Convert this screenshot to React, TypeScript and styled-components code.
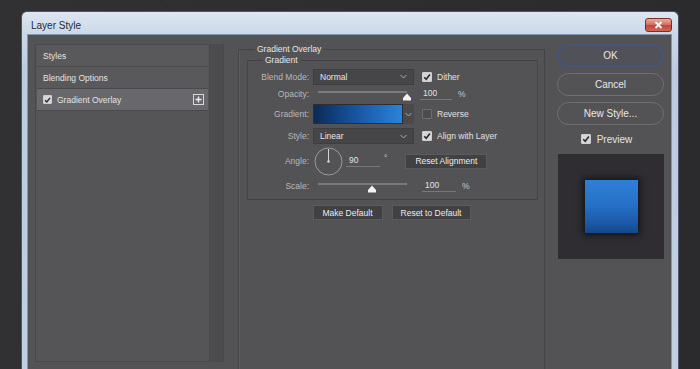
import React from "react";
import styled, { createGlobalStyle } from "styled-components";

const GlobalStyle = createGlobalStyle`
  html, body {
    margin: 0;
    padding: 0;
    background: #2c2b2e;
    overflow: hidden;
  }
  body {
    font-family: "Liberation Sans", Arial, sans-serif;
  }
`;

const Screen = styled.div`
  width: 700px;
  height: 369px;
  overflow: hidden;
  box-sizing: border-box;
  padding: 11px 0 0 21px;
  background: linear-gradient(90deg, #313033 0%, #2b2a2d 100%);
`;

const Window = styled.div`
  width: 658px;
  height: 400px;
  display: flex;
  flex-direction: column;
  box-sizing: border-box;
  padding: 0 6px 0 5px;
  border: 1px solid #4a5669;
  border-bottom: none;
  border-radius: 6px 6px 0 0;
  background: linear-gradient(180deg, #dde6f1 0px, #cbd8e8 22px, #bccbe0 60px, #c3d0e3 100%);
`;

const TitleBar = styled.div`
  height: 22px;
  display: flex;
  align-items: flex-start;
  justify-content: space-between;
`;

const TitleText = styled.div`
  padding: 8px 0 0 4px;
  font-family: "Liberation Sans", Arial, sans-serif;
  font-size: 10px;
  color: #1c2a3c;
`;

const CloseButton = styled.div`
  width: 27px;
  height: 14px;
  margin-top: 6px;
  box-sizing: border-box;
  border: 1px solid #7a2f27;
  border-radius: 3px;
  background: linear-gradient(180deg, #e6aa9f 0%, #d47466 45%, #c2473a 55%, #d06a56 100%);
  display: flex;
  align-items: center;
  justify-content: center;
`;

const Content = styled.div`
  flex: 1;
  display: flex;
  gap: 14px;
  box-sizing: border-box;
  padding: 9px 7px 0 7px;
  border: 1px solid #8596ad;
  border-bottom: none;
  background: #535255;
  font-size: 8.5px;
  color: #e2e2e2;
`;

/* left style list */

const LeftColumn = styled.div`
  display: flex;
  width: 189px;
  height: 318px;
  flex: none;
`;

const StyleList = styled.div`
  width: 175px;
  box-sizing: border-box;
  border: 1px solid #49484b;
  background: #555457;
  padding: 0 1px;
  display: flex;
  flex-direction: column;
`;

const StyleItem = styled.div<{ $selected?: boolean }>`
  height: 21px;
  display: flex;
  align-items: center;
  gap: 5px;
  padding: 0 4px 0 6px;
  border-bottom: 1px solid #4a494c;
  background: ${(p) => (p.$selected ? "#68676b" : "#59585b")};
  color: #e4e4e4;
`;

const ItemText = styled.span`
  flex: 1;
`;

const PlusBox = styled.div`
  width: 11px;
  height: 11px;
  box-sizing: border-box;
  border: 1px solid #d8d8d8;
  display: flex;
  align-items: center;
  justify-content: center;
`;

const ScrollTrack = styled.div`
  width: 14px;
  background: #4c4b4e;
  border-right: 1px solid #48474a;
  box-sizing: border-box;
`;

/* middle group boxes */

const GroupBox = styled.fieldset<{ $inner?: boolean }>`
  margin: ${(p) => (p.$inner ? "1px 6px 0 8px" : "0")};
  padding: 0;
  border: 1px solid #444346;
  box-shadow: ${(p) => (p.$inner ? "none" : "inset 1px 0 0 #5c5b5e")};
  min-width: 0;
  ${(p) => (p.$inner ? "" : "width: 307px; flex: none; box-sizing: border-box;")}
  display: flex;
  flex-direction: column;
`;

const GroupTitle = styled.legend<{ $offset: number }>`
  margin-left: ${(p) => p.$offset}px;
  padding: 0 2px;
  line-height: 10px;
  font-size: 8.5px;
  color: #e6e6e6;
`;

const Rows = styled.div`
  display: flex;
  flex-direction: column;
  padding: 3px 0 3px 0;
`;

const Row = styled.div<{ $h: number }>`
  height: ${(p) => p.$h}px;
  display: flex;
  align-items: center;
`;

const Label = styled.div`
  width: 61px;
  flex: none;
  padding-right: 4px;
  text-align: right;
  color: #b8b8b8;
`;

const Select = styled.div`
  width: 101px;
  height: 16px;
  box-sizing: border-box;
  display: flex;
  align-items: center;
  justify-content: space-between;
  padding: 0 6px 0 6px;
  background: #464548;
  border: 1px solid #3e3d40;
  color: #e6e6e6;
`;

const CheckGroup = styled.div`
  margin-left: 8px;
  display: flex;
  align-items: center;
  gap: 5px;
  color: #e2e2e2;
`;

const Box = styled.div<{ $checked: boolean; $size?: number }>`
  width: ${(p) => p.$size ?? 10}px;
  height: ${(p) => p.$size ?? 10}px;
  box-sizing: border-box;
  border-radius: 1px;
  flex: none;
  display: flex;
  align-items: center;
  justify-content: center;
  background: ${(p) => (p.$checked ? "#d6d6d6" : "#4b4a4d")};
  border: 1px solid ${(p) => (p.$checked ? "#cfcfcf" : "#6e6d70")};
`;

const SliderArea = styled.div`
  width: 101px;
  height: 16px;
  box-sizing: border-box;
  padding: 5px 7px 0 5px;
`;

const Track = styled.div`
  position: relative;
  height: 2px;
  background: #7a797c;
`;

const Thumb = styled.svg`
  position: absolute;
  top: 2px;
  transform: translateX(-50%);
`;

const NumField = styled.div<{ $w: number; $ml: number }>`
  width: ${(p) => p.$w}px;
  margin-left: ${(p) => p.$ml}px;
  box-sizing: border-box;
  padding: 0 0 1px 3px;
  border-bottom: 1px solid #78777a;
  color: #e2e2e2;
`;

const Unit = styled.span<{ $raise?: boolean }>`
  margin-left: 6px;
  color: #c8c8c8;
  ${(p) => (p.$raise ? "align-self: flex-start; margin-top: 7px; margin-left: 4px;" : "")}
`;

const GradientSwatch = styled.div`
  width: 90px;
  height: 20px;
  box-sizing: border-box;
  border: 1px solid #2e2d30;
  background: linear-gradient(90deg, #0c2a55 0%, #134a8f 35%, #2168bb 70%, #2b82d8 100%);
`;

const SwatchArrow = styled.div`
  width: 11px;
  height: 20px;
  background: #4a494c;
  display: flex;
  align-items: center;
  justify-content: center;
`;

const Dial = styled.svg`
  margin-left: 1px;
  flex: none;
`;

const FlatButton = styled.div<{ $w: number; $ml?: number }>`
  width: ${(p) => p.$w}px;
  height: 15px;
  margin-left: ${(p) => p.$ml ?? 0}px;
  box-sizing: border-box;
  display: flex;
  align-items: center;
  justify-content: center;
  background: #414043;
  border: 1px solid #5a595c;
  color: #ececec;
  font-size: 8.5px;
`;

const ButtonRow = styled.div`
  margin-top: 5px;
  display: flex;
  justify-content: center;
  gap: 9px;
`;

/* right column */

const RightColumn = styled.div`
  width: 107px;
  flex: none;
  margin-left: -2px;
  display: flex;
  flex-direction: column;
  gap: 6px;
`;

const PillButton = styled.div<{ $focused?: boolean }>`
  height: 23px;
  box-sizing: border-box;
  border-radius: 12px;
  display: flex;
  align-items: center;
  justify-content: center;
  font-size: 10px;
  color: #e8e8e8;
  border: ${(p) => (p.$focused ? "2px solid #44567a" : "1px solid #706f73")};
  background: ${(p) => (p.$focused ? "#505159" : "transparent")};
`;

const PreviewToggle = styled.div`
  height: 14px;
  margin-top: 1px;
  display: flex;
  align-items: center;
  justify-content: center;
  gap: 6px;
  font-size: 10px;
  color: #e4e4e4;
  padding-right: 8px;
`;

const PreviewBox = styled.div`
  width: 106px;
  height: 105px;
  margin: 2px 0 0 1px;
  background: #2f2d31;
  display: flex;
  align-items: center;
  justify-content: center;
`;

const PreviewSquare = styled.div`
  width: 53px;
  height: 53px;
  background: linear-gradient(180deg, #2f7fd8 0%, #2671c8 45%, #1b5aa8 80%, #15478a 100%);
  box-shadow: 0 0 6px 2px rgba(10, 10, 14, 0.75);
`;

function Check() {
  return (
    <svg width="8" height="8" viewBox="0 0 8 8">
      <path d="M1.2 4.2 L3.2 6.2 L6.9 1.6" fill="none" stroke="#2a2a2a" strokeWidth="1.6" />
    </svg>
  );
}

function Checkbox({ checked, size }: { checked: boolean; size?: number }) {
  return <Box $checked={checked} $size={size}>{checked && <Check />}</Box>;
}

function Chevron() {
  return (
    <svg width="7" height="5" viewBox="0 0 7 5">
      <path d="M0.5 1 L3.5 4 L6.5 1" fill="none" stroke="#a8a8a8" strokeWidth="1" />
    </svg>
  );
}

function Slider({ value }: { value: number }) {
  return (
    <SliderArea>
      <Track>
        <Thumb width="9" height="8" viewBox="0 0 9 8" style={{ left: `${value}%` }}>
          <path d="M4.5 0.5 L8.5 5 L8.5 7.5 L0.5 7.5 L0.5 5 Z" fill="#f2f2f2" />
        </Thumb>
      </Track>
    </SliderArea>
  );
}

export default function App(): React.JSX.Element {
  return (
    <>
      <GlobalStyle />
      <Screen>
        <Window>
          <TitleBar>
            <TitleText>Layer Style</TitleText>
            <CloseButton>
              <svg width="9" height="8" viewBox="0 0 9 8">
                <path d="M1.5 1 L7.5 7 M7.5 1 L1.5 7" stroke="#ffffff" strokeWidth="1.8" />
              </svg>
            </CloseButton>
          </TitleBar>
          <Content>
            <LeftColumn>
              <StyleList>
                <StyleItem>
                  <ItemText>Styles</ItemText>
                </StyleItem>
                <StyleItem>
                  <ItemText>Blending Options</ItemText>
                </StyleItem>
                <StyleItem $selected>
                  <Checkbox checked size={9} />
                  <ItemText>Gradient Overlay</ItemText>
                  <PlusBox>
                    <svg width="7" height="7" viewBox="0 0 7 7">
                      <path d="M3.5 0.5 V6.5 M0.5 3.5 H6.5" stroke="#eeeeee" strokeWidth="1.4" />
                    </svg>
                  </PlusBox>
                </StyleItem>
              </StyleList>
              <ScrollTrack />
            </LeftColumn>

            <GroupBox>
              <GroupTitle $offset={16}>Gradient Overlay</GroupTitle>
              <GroupBox $inner>
                <GroupTitle $offset={15}>Gradient</GroupTitle>
                <Rows>
                  <Row $h={17}>
                    <Label>Blend Mode:</Label>
                    <Select>
                      <span>Normal</span>
                      <Chevron />
                    </Select>
                    <CheckGroup>
                      <Checkbox checked />
                      Dither
                    </CheckGroup>
                  </Row>
                  <Row $h={17}>
                    <Label>Opacity:</Label>
                    <Slider value={100} />
                    <NumField $w={32} $ml={6}>100</NumField>
                    <Unit>%</Unit>
                  </Row>
                  <Row $h={24}>
                    <Label>Gradient:</Label>
                    <GradientSwatch />
                    <SwatchArrow>
                      <Chevron />
                    </SwatchArrow>
                    <CheckGroup>
                      <Checkbox checked={false} />
                      Reverse
                    </CheckGroup>
                  </Row>
                  <Row $h={20}>
                    <Label>Style:</Label>
                    <Select>
                      <span>Linear</span>
                      <Chevron />
                    </Select>
                    <CheckGroup>
                      <Checkbox checked />
                      Align with Layer
                    </CheckGroup>
                  </Row>
                  <Row $h={30}>
                    <Label>Angle:</Label>
                    <Dial width="29" height="29" viewBox="0 0 29 29">
                      <circle cx="14.5" cy="14.5" r="13.5" fill="none" stroke="#9b9a9d" strokeWidth="1" />
                      <line x1="14.5" y1="14.5" x2="14.5" y2="2" stroke="#d4d4d4" strokeWidth="1" />
                      <circle cx="14.5" cy="14.5" r="1.3" fill="#d4d4d4" />
                    </Dial>
                    <NumField $w={34} $ml={3}>90</NumField>
                    <Unit $raise>°</Unit>
                    <FlatButton $w={82} $ml={18}>Reset Alignment</FlatButton>
                  </Row>
                  <Row $h={20}>
                    <Label>Scale:</Label>
                    <Slider value={61} />
                    <NumField $w={34} $ml={8}>100</NumField>
                    <Unit>%</Unit>
                  </Row>
                </Rows>
              </GroupBox>
              <ButtonRow>
                <FlatButton $w={70}>Make Default</FlatButton>
                <FlatButton $w={79}>Reset to Default</FlatButton>
              </ButtonRow>
            </GroupBox>

            <RightColumn>
              <PillButton $focused>OK</PillButton>
              <PillButton>Cancel</PillButton>
              <PillButton>New Style...</PillButton>
              <PreviewToggle>
                <Checkbox checked />
                Preview
              </PreviewToggle>
              <PreviewBox>
                <PreviewSquare />
              </PreviewBox>
            </RightColumn>
          </Content>
        </Window>
      </Screen>
    </>
  );
}
